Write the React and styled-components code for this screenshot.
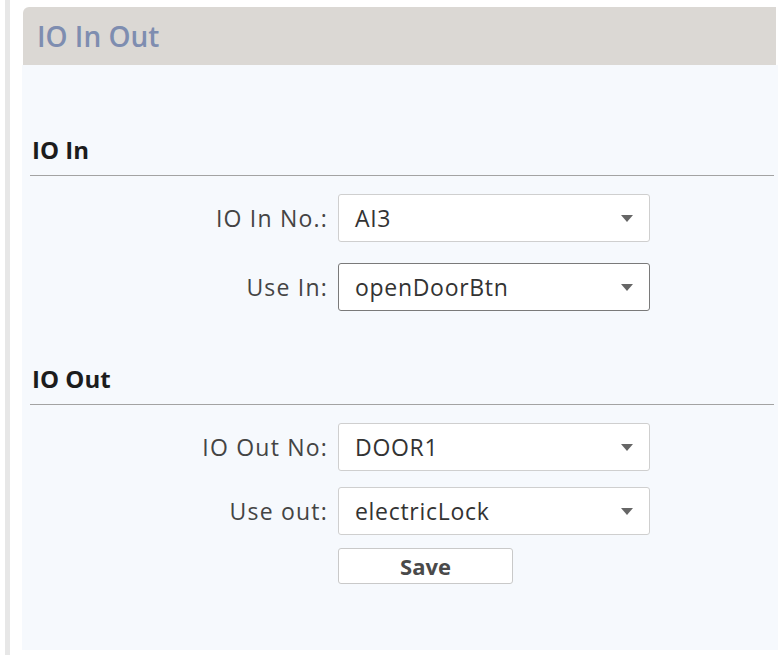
import React from "react";
import styled, { createGlobalStyle } from "styled-components";

const GlobalStyle = createGlobalStyle`
  html, body {
    margin: 0;
    padding: 0;
    background: #ffffff;
  }
  body {
    font-family: "Open Sans", "Liberation Sans", sans-serif;
  }
`;

const rowsIn = [
  { label: "IO In No.:", value: "AI3" },
  { label: "Use In:", value: "openDoorBtn", active: true },
];

const rowsOut = [
  { label: "IO Out No:", value: "DOOR1" },
  { label: "Use out:", value: "electricLock" },
];

const Arrow = () => (
  <svg width="12" height="7" viewBox="0 0 12 7">
    <path d="M0 0 L12 0 L6 7 Z" fill="#666666" />
  </svg>
);

const Field = ({ label, value, active }) => (
  <Row>
    <Label>{label}</Label>
    <Select $active={active}>
      <span>{value}</span>
      <Arrow />
    </Select>
  </Row>
);

const App = () => {
  return (
    <Page>
      <GlobalStyle />
      <Rail />
      <Panel>
        <Header>
          <Title>IO In Out</Title>
        </Header>
        <Body>
          <SectionHead $first>IO In</SectionHead>
          <Rows>
            {rowsIn.map((r) => (
              <Field key={r.label} {...r} />
            ))}
          </Rows>

          <SectionHead>IO Out</SectionHead>
          <Rows $tight>
            {rowsOut.map((r) => (
              <Field key={r.label} {...r} />
            ))}
            <Row>
              <Label />
              <SaveBtn>Save</SaveBtn>
            </Row>
          </Rows>
        </Body>
      </Panel>
    </Page>
  );
};

export default App;

const Page = styled.div`
  display: flex;
  width: 784px;
  height: 660px;
  padding: 0 0 0 5px;
  box-sizing: border-box;
  background: #ffffff;
`;

const Rail = styled.div`
  width: 5px;
  height: 655px;
  background: #e7e7e7;
  margin-right: 12px;
  flex-shrink: 0;
`;

const Panel = styled.div`
  flex: 1;
  display: flex;
  flex-direction: column;
  padding-top: 7px;
  padding-right: 6px;
`;

const Header = styled.div`
  height: 58px;
  background: #dbd8d4;
  border-radius: 6px 0 0 0;
  display: flex;
  align-items: center;
  padding-left: 14px;
  margin-left: 1px;
  margin-right: 2px;
`;

const Title = styled.div`
  font-size: 28px;
  font-weight: 600;
  color: #7e8db0;
`;

const Body = styled.div`
  background: #f6f9fd;
  height: 585px;
  padding: 0 4px 0 8px;
`;

const SectionHead = styled.div`
  margin-top: ${(p) => (p.$first ? "73px" : "56px")};
  padding-bottom: 13px;
  padding-left: 2px;
  border-bottom: 1px solid #a3a3a3;
  font-size: 24px;
  line-height: 24px;
  font-weight: 700;
  color: #1c1c1c;
`;

const Rows = styled.div`
  display: flex;
  flex-direction: column;
  gap: ${(p) => (p.$tight ? "16px" : "21px")};
  margin-top: 18px;
`;

const Row = styled.div`
  display: flex;
  align-items: flex-start;
`;

const Label = styled.div`
  width: 298px;
  padding-right: 10px;
  text-align: right;
  font-size: 23px;
  line-height: 48px;
  letter-spacing: 1.2px;
  color: #444444;
`;

const Select = styled.div`
  width: 312px;
  height: 48px;
  box-sizing: border-box;
  display: flex;
  align-items: center;
  justify-content: space-between;
  padding: 0 16px 0 16px;
  background: #ffffff;
  border: 1px solid ${(p) => (p.$active ? "#7a7a7a" : "#cfcfcf")};
  border-radius: 3px;
  font-size: 23px;
  letter-spacing: 0.7px;
  color: #333333;
`;

const SaveBtn = styled.div`
  width: 175px;
  height: 36px;
  margin-top: -3px;
  box-sizing: border-box;
  border: 1px solid #c9c9c9;
  border-radius: 3px;
  background: #ffffff;
  display: flex;
  align-items: center;
  justify-content: center;
  font-size: 22px;
  font-weight: 700;
  color: #4a4a4a;
`;
